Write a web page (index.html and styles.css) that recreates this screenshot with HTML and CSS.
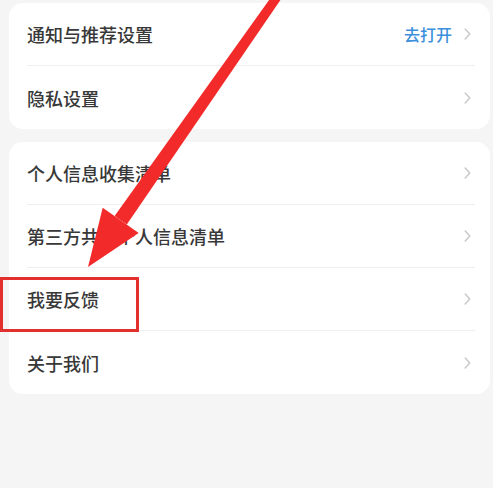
FILE: index.html
```html
<!DOCTYPE html>
<html lang="zh-CN">
<head>
<meta charset="utf-8">
<title>设置</title>
<link rel="stylesheet" href="styles.css">
</head>
<body>
<div class="page">
  <div class="card">
    <div class="row">
      <span class="label">通知与推荐设置</span>
      <span class="value">去打开</span>
      <svg class="chev" width="7" height="12" viewBox="0 0 7 12"><path d="M1.2 1 L5.8 6 L1.2 11" fill="none" stroke="#c9c9c9" stroke-width="1.5" stroke-linecap="round" stroke-linejoin="round"/></svg>
    </div>
    <div class="row">
      <span class="label">隐私设置</span>
      <svg class="chev" width="7" height="12" viewBox="0 0 7 12"><path d="M1.2 1 L5.8 6 L1.2 11" fill="none" stroke="#c9c9c9" stroke-width="1.5" stroke-linecap="round" stroke-linejoin="round"/></svg>
    </div>
  </div>
  <div class="card">
    <div class="row">
      <span class="label">个人信息收集清单</span>
      <svg class="chev" width="7" height="12" viewBox="0 0 7 12"><path d="M1.2 1 L5.8 6 L1.2 11" fill="none" stroke="#c9c9c9" stroke-width="1.5" stroke-linecap="round" stroke-linejoin="round"/></svg>
    </div>
    <div class="row">
      <span class="label">第三方共享个人信息清单</span>
      <svg class="chev" width="7" height="12" viewBox="0 0 7 12"><path d="M1.2 1 L5.8 6 L1.2 11" fill="none" stroke="#c9c9c9" stroke-width="1.5" stroke-linecap="round" stroke-linejoin="round"/></svg>
    </div>
    <div class="row">
      <span class="label">我要反馈</span>
      <svg class="chev" width="7" height="12" viewBox="0 0 7 12"><path d="M1.2 1 L5.8 6 L1.2 11" fill="none" stroke="#c9c9c9" stroke-width="1.5" stroke-linecap="round" stroke-linejoin="round"/></svg>
    </div>
    <div class="row">
      <span class="label">关于我们</span>
      <svg class="chev" width="7" height="12" viewBox="0 0 7 12"><path d="M1.2 1 L5.8 6 L1.2 11" fill="none" stroke="#c9c9c9" stroke-width="1.5" stroke-linecap="round" stroke-linejoin="round"/></svg>
    </div>
  </div>
</div>
<div class="highlight"></div>
<svg class="arrow" width="493" height="488" viewBox="0 0 493 488">
  <polygon points="114.6,216 126.8,224.6 285.5,-7.4 278.1,-12.6" fill="#f22a2a"/>
  <polygon points="88,267 102.7,207.7 138.7,232.9" fill="#f22a2a"/>
</svg>
</body>
</html>
```

FILE: styles.css
```css
html, body {
  margin: 0;
  padding: 0;
  background: #f5f5f5;
}
body {
  font-family: "Noto Sans CJK SC", "Noto Sans", sans-serif;
  width: 493px;
  height: 488px;
  overflow: hidden;
  position: relative;
}
.page {
  padding: 3px 3px 0 9px;
  display: flex;
  flex-direction: column;
  gap: 13px;
}
.card {
  background: #ffffff;
  border-radius: 14px;
  padding: 0 15px 0 18px;
}
.row {
  box-sizing: border-box;
  height: 63px;
  display: flex;
  align-items: center;
  padding-right: 4px;
  border-bottom: 1px solid #efefef;
}
.row:last-child {
  border-bottom: none;
}
.label {
  flex: 1;
  font-size: 18px;
  font-weight: 500;
  color: #383838;
  line-height: 1;
}
.value {
  font-size: 16px;
  font-weight: 500;
  color: #3b8fdb;
  margin-right: 12px;
  line-height: 1;
}
.chev {
  display: block;
  flex: none;
}
.highlight {
  position: absolute;
  left: 0;
  top: 277px;
  width: 139px;
  height: 55px;
  box-sizing: border-box;
  border: 3px solid #e2302e;
}
.arrow {
  position: absolute;
  left: 0;
  top: 0;
  pointer-events: none;
}
```
